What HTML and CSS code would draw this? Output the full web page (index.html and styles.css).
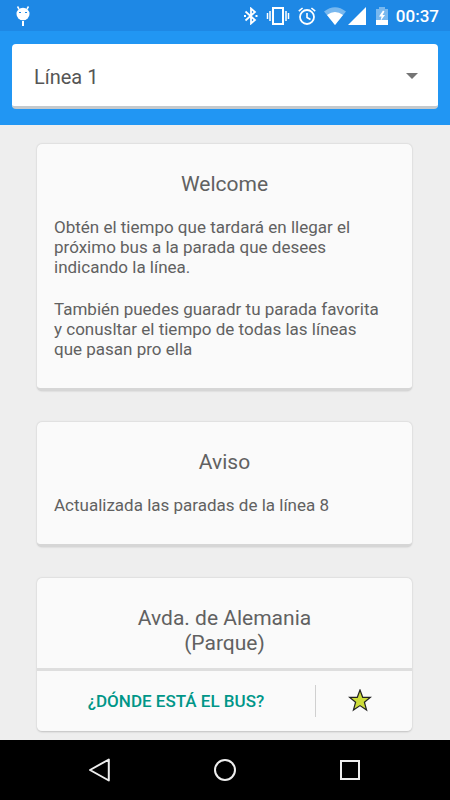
FILE: index.html
```html
<!DOCTYPE html>
<html lang="es">
<head>
  <meta charset="UTF-8">
  <meta name="viewport" content="width=device-width, initial-scale=1.0">
  <title>Línea 1</title>
  <link rel="stylesheet" href="styles.css">
</head>

<body>
<div class="status-bar">
  <svg class="debug-icon" width="14" height="20" viewBox="0 0 14 20">
    <path d="M1.5 0.5L3 3M12.5 0.5L11 3" stroke="#fff" stroke-width="1.5"/>
    <ellipse cx="7" cy="8" rx="6.5" ry="6.3" fill="#fff"/>
    <path d="M3 6h2v1H3zM9 6h2v1H9z" fill="#1e88e5"/>
    <path d="M6 15h2v5H6z" fill="#fff"/>
  </svg>
  <div class="status-icons">
    <svg width="14" height="18" viewBox="0 0 14 18">
      <path d="M1.5 4.5L11 13L7 16.5V1.5L11 5L1.5 13.5" fill="none" stroke="#fff" stroke-width="1.8"/>
      <path d="M0 8h2v2H0zM11.500 8h2v2h-2z" fill="#fff"/>
    </svg>
    <svg width="24" height="18" viewBox="0 0 24 18">
      <path d="M7 1h10v16H7z" fill="none" stroke="#fff" stroke-width="2"/>
      <path d="M1.500 6v6M4 4v10M20 4v10M22.500 6v6" stroke="#fff" stroke-width="1.500"/>
    </svg>
    <svg width="18" height="18" viewBox="0 0 18 18">
      <circle cx="9" cy="10" r="7" fill="none" stroke="#fff" stroke-width="1.800"/>
      <path d="M9 6v4.500l3.500 2M0.800 4.200L4.600 1M17.200 4.200L13.400 1" fill="none" stroke="#fff" stroke-width="1.600"/>
    </svg>
    <svg class="wifi-icon" width="22" height="18" viewBox="0 0 22 18">
      <path d="M0 4.500Q11 -4 22 4.500L11 18z" fill="#78b8ef"/>
      <path d="M3 8Q11 2 19 8L11 18z" fill="#fff"/>
    </svg>
    <svg width="18" height="18" viewBox="0 0 18 18">
      <path d="M18 0v18H0z" fill="#fff"/>
    </svg>
    <svg class="battery-icon" width="12" height="18" viewBox="0 0 12 18">
      <path d="M3 0h6v2h3v12H0V2h3z" fill="#78b8ef"/>
      <path d="M0 13h12v5H0z" fill="#fff"/>
      <path d="M7 3.500L3 9.500h2.500L4.500 14L9 8H6.500L8.500 4.500z" fill="#fff"/>
    </svg>
    <span class="clock">00:37</span>
  </div>
</div>

<header class="toolbar">
  <div class="select-box">
    <select class="line-select" aria-label="Línea">
      <option>Línea 1</option>
      <option>Línea 8</option>
    </select>
    <svg class="select-arrow" width="12" height="6" viewBox="0 0 12 6">
      <path d="M0 0h12L6 6z" fill="#757575"/>
    </svg>
  </div>
</header>

<main class="cards">
  <section class="card">
    <h2 class="card-title">Welcome</h2>
    <p>Obtén el tiempo que tardará en llegar el próximo bus a la parada que desees indicando la línea.</p>
    <p>También puedes guaradr tu parada favorita y conusltar el tiempo de todas las líneas que pasan pro ella</p>
  </section>

  <section class="card">
    <h2 class="card-title">Aviso</h2>
    <p>Actualizada las paradas de la línea 8</p>
  </section>

  <section class="card card-stop">
    <h2 class="card-title">Avda. de Alemania<br>(Parque)</h2>
    <div class="card-actions">
      <button class="find-button" type="button">¿DÓNDE ESTÁ EL BUS?</button>
      <button class="fav-button" type="button" aria-label="Favorita">
        <svg width="24" height="24" viewBox="0 0 24 24">
          <path d="M12 1l2.700 7.300H22.500L16.400 13.200 18.600 21 12 16.600 5.400 21 7.600 13.200 1.500 8.300H9.300z" fill="#cddc39" stroke="#222" stroke-width="1.200"/>
        </svg>
      </button>
    </div>
  </section>
</main>

<nav class="nav-bar">
  <button class="nav-button" type="button" aria-label="Atrás">
    <svg width="24" height="24" viewBox="0 0 24 24">
      <path d="M20.800 1.500v21L2 12z" fill="none" stroke="#eee" stroke-width="2" stroke-linejoin="round"/>
    </svg>
  </button>
  <button class="nav-button" type="button" aria-label="Inicio">
    <svg width="24" height="24" viewBox="0 0 24 24">
      <circle cx="12" cy="12" r="10" fill="none" stroke="#eee" stroke-width="2"/>
    </svg>
  </button>
  <button class="nav-button" type="button" aria-label="Recientes">
    <svg width="24" height="24" viewBox="0 0 24 24">
      <rect x="3" y="3" width="18" height="18" fill="none" stroke="#eee" stroke-width="2"/>
    </svg>
  </button>
</nav>
</body>
</html>
```
FILE: styles.css
```css
* {
  box-sizing: border-box;
}
body {
  margin: 0;
  min-height: 100vh;
  display: flex;
  flex-direction: column;
  font-family: Roboto, "Liberation Sans", sans-serif;
  background-color: #eee;
  color: #616161;
}
svg {
  display: block;
}
button {
  border: none;
  padding: 0;
  background: none;
  font-family: inherit;
  cursor: pointer;
}

/* status bar */
.status-bar {
  display: flex;
  justify-content: space-between;
  align-items: center;
  height: 31px;
  padding: 0 11px 0 16px;
  background-color: #1e88e5;
}
.status-icons {
  display: flex;
  align-items: center;
  gap: 8px;
}
.wifi-icon {
  margin-right: -6px;
}
.battery-icon {
  margin-left: 2px;
}
.clock {
  color: white;
  font-size: 17px;
  font-weight: 500;
  line-height: 20px;
}

/* line selector */
.toolbar {
  padding: 13px 12px 16px;
  background-color: #2196f3;
}
.select-box {
  position: relative;
}
.line-select {
  display: block;
  appearance: none;
  width: 100%;
  height: 65px;
  padding: 3px 50px 0 22px;
  border: none;
  border-bottom: 3px solid #c4c9cd;
  border-radius: 4px;
  background-color: white;
  color: #555;
  font-family: inherit;
  font-size: 20px;
}
.select-arrow {
  position: absolute;
  right: 20px;
  top: 29px;
  pointer-events: none;
}

/* cards */
.cards {
  flex: 1;
  display: flex;
  flex-direction: column;
  gap: 31px;
  padding: 19px 38px 8px 37px;
}
.card {
  padding: 28px 24px 29px 17px;
  border-bottom: 3px solid #d6d6d6;
  border-radius: 5px;
  background-color: #fafafa;
  box-shadow: 0 0 2px rgba(0, 0, 0, 0.2);
}
.card-title {
  margin: 0 -7px 20px 0;
  font-size: 21px;
  font-weight: 400;
  line-height: 25px;
  text-align: center;
}
.card p {
  margin: 0;
  font-size: 17px;
  line-height: 20px;
}
.card p + p {
  margin-top: 22px;
}
.card-stop {
  padding: 28px 0 0;
  border-bottom: 1px solid #ccc;
}
.card-stop .card-title {
  margin: 0 0 12px;
}
.card-actions {
  display: flex;
  align-items: center;
  height: 63px;
  border-top: 3px solid #dedede;
}
.find-button {
  flex: 1;
  height: 60px;
  color: #009688;
  font-size: 17px;
  font-weight: 500;
}
.fav-button {
  display: flex;
  align-items: center;
  justify-content: center;
  width: 97px;
  height: 32px;
  padding-right: 8px;
  border-left: 1px solid #d0d0d0;
}

/* navigation bar */
.nav-bar {
  display: flex;
  justify-content: center;
  height: 60px;
  background-color: black;
}
.nav-button {
  display: flex;
  align-items: center;
  justify-content: center;
  width: 125px;
}
```
